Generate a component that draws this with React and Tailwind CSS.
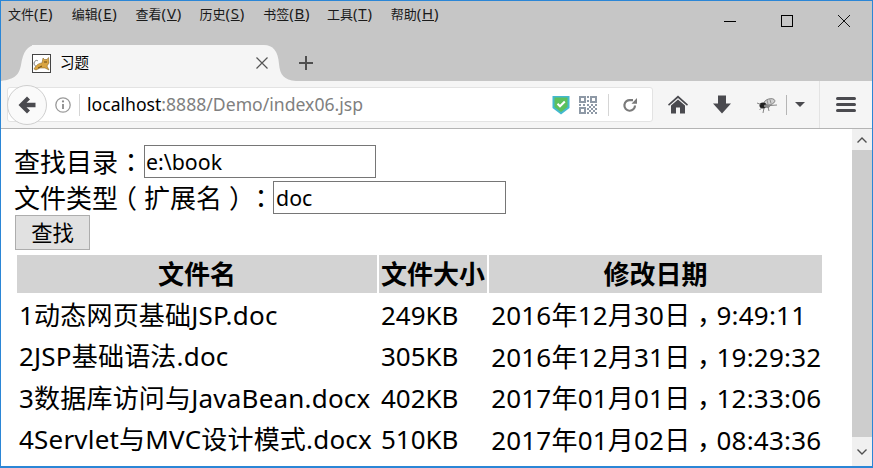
const sans = "font-['Noto_Sans','Noto_Sans_CJK_SC',sans-serif]";
const tcPunct = "font-['Noto_Sans_CJK_TC',sans-serif]";

const menus = [
  ["文件", "F"],
  ["编辑", "E"],
  ["查看", "V"],
  ["历史", "S"],
  ["书签", "B"],
  ["工具", "T"],
  ["帮助", "H"],
];

const files = [
  ["1动态网页基础JSP.doc", "249KB", "2016年12月30日", "9:49:11"],
  ["2JSP基础语法.doc", "305KB", "2016年12月31日", "19:29:32"],
  ["3数据库访问与JavaBean.docx", "402KB", "2017年01月01日", "12:33:06"],
  ["4Servlet与MVC设计模式.docx", "510KB", "2017年01月02日", "08:43:36"],
];

const TomcatIcon = () => (
  <svg width="19" height="19" viewBox="0 0 19 19" className="shrink-0">
    <rect x="0.5" y="0.5" width="18" height="18" fill="#fff" stroke="#444" />
    <path d="M2 15 C4 11 7 9 10 9 L11 4 L12.500 5.500 L15 5.500 L16.500 3.500 L17 9 L15 12 L17 16 L13 14 L8 14 L4 16 Z" fill="#d9a441" stroke="#7a5a1c" strokeWidth="0.5" />
    <path d="M2 9 C3 6 5 6 6 7 M2 9 C2 11 3 12 4 12" fill="none" stroke="#777" />
    <path d="M12 8 L15 8 M6 14 L10 12" stroke="#6b4a12" />
  </svg>
);

const BackIcon = () => (
  <svg width="20" height="20" viewBox="0 0 20 20">
    <path d="M10 1.500 L1.500 10 L10 18.500 L13 15.500 L9.500 12.200 H18.500 V7.800 H9.500 L13 4.500 Z" fill="#4a4a4f" />
  </svg>
);

const InfoIcon = () => (
  <svg width="18" height="18" viewBox="0 0 18 18">
    <circle cx="9" cy="9" r="7.200" fill="none" stroke="#9a9a9a" strokeWidth="1.300" />
    <circle cx="9" cy="5.400" r="1.100" fill="#8a8a8a" />
    <path d="M9 8 V13" stroke="#8a8a8a" strokeWidth="1.800" />
  </svg>
);

const ShieldIcon = () => (
  <svg width="18" height="20" viewBox="0 0 18 20">
    <path d="M0.500 1 H17.500 V13 L9 19.500 L0.500 13 Z" fill="#43b9cf" />
    <path d="M2.500 2.500 H15.500 V12 L9 17 L2.500 12 Z" fill="#5cc05c" />
    <path d="M5.500 8.800 L8 11.300 L12.800 6.500" fill="none" stroke="#fff" strokeWidth="2" />
  </svg>
);

const QrIcon = () => (
  <svg width="18" height="18" viewBox="0 0 18 18" fill="#8e99a6">
    <path fillRule="evenodd" d="M0 0 H7 V7 H0 Z M2 2 V5 H5 V2 Z M11 0 H18 V7 H11 Z M13 2 V5 H16 V2 Z M0 11 H7 V18 H0 Z M2 13 V16 H5 V13 Z" />
    <path d="M8 0 H10 V2 H8 Z M8 4 H10 V6 H8 Z M8 8 H10 V10 H8 Z M4 8 H6 V10 H4 Z M0 8 H2 V10 H0 Z M12 8 H14 V10 H12 Z M16 8 H18 V10 H16 Z M8 12 H10 V14 H8 Z M8 16 H10 V18 H8 Z M10 10 H12 V12 H10 Z M14 10 H16 V12 H14 Z M12 12 H14 V14 H12 Z M16 12 H18 V14 H16 Z M10 14 H12 V16 H10 Z M14 14 H16 V16 H14 Z M12 16 H14 V18 H12 Z M16 16 H18 V18 H16 Z" />
  </svg>
);

const ReloadIcon = () => (
  <svg width="16" height="16" viewBox="0 0 16 16">
    <path d="M13 8.500 A5.300 5.300 0 1 1 8.500 3.200 H11" fill="none" stroke="#7a7a7a" strokeWidth="2.200" />
    <path d="M9.500 6.800 L15 6.800 L15 1 Z" fill="#7a7a7a" />
  </svg>
);

const HomeIcon = () => (
  <svg width="20" height="19" viewBox="0 0 20 19" fill="#4a4a4f">
    <path d="M10 0.500 L0 9.500 L1 10.800 L10 3 L19 10.800 L20 9.500 Z" />
    <path d="M10 4.500 L3 10.500 V18.500 H8 V12.500 H12 V18.500 H17 V10.500 Z" />
  </svg>
);

const DownloadIcon = () => (
  <svg width="20" height="19" viewBox="0 0 20 19">
    <path d="M6 0.500 H14 V8.500 H19 L10 18.500 L1 8.500 H6 Z" fill="#4a4a4f" />
  </svg>
);

const BeeIcon = () => (
  <svg width="20" height="18" viewBox="0 0 20 18">
    <ellipse cx="12.500" cy="6" rx="5.500" ry="3" fill="#d0d0d0" stroke="#666" strokeWidth="0.700" transform="rotate(-15 12 6)" />
    <path d="M10 4 L11 8 M13 3.500 L14 7.500" stroke="#666" strokeWidth="0.600" />
    <ellipse cx="6" cy="9.500" rx="3.500" ry="3" fill="#1f1f1f" />
    <ellipse cx="10" cy="10" rx="3.200" ry="1.800" fill="#8a8a8a" />
    <path d="M0 7 L4 8.500 M2.500 14 L5 11.500 M7 12 L6 17 M11 11 L12 15 M13 9.500 L20 9" stroke="#555" strokeWidth="0.700" />
  </svg>
);

const TabSkirtLeft = () => (
  <svg width="36" height="36" viewBox="0 0 36 36" className="block shrink-0">
    <path d="M0 36 C14 34 18 30 20 20 C22 7 26 0 36 0 V36 Z" fill="#f5f5f5" />
  </svg>
);

const TabSkirtRight = () => (
  <svg width="32" height="36" viewBox="0 0 32 36" className="block shrink-0">
    <path d="M0 0 C9 0 14 6 15 19 C16 30 20 35 32 36 H0 Z" fill="#f5f5f5" />
  </svg>
);

export default function App() {
  return (
    <div className={`w-[873px] h-[468px] flex flex-col overflow-hidden bg-white border border-[#2b86d6] border-b-2 [text-spacing-trim:space-all] ${sans}`}>
      {/* title bar + tabs */}
      <div className="h-[80px] bg-[#c6c6c6] flex flex-col shrink-0 relative">
        <div className="h-[24px] flex items-center pl-[7px] text-[13px] text-[#1a1a1a] shrink-0">
          {menus.map(([label, key]) => (
            <span key={key} className="w-[63.800px] whitespace-nowrap">
              {label}
              <span className="text-[15px] tracking-[0.8px]">
                (<span className="underline">{key}</span>)
              </span>
            </span>
          ))}
        </div>
        <div className="absolute right-[21px] top-[13px] flex items-center gap-[45px]">
          <div className="w-[12px] h-[1px] bg-black" />
          <div className="w-[12px] h-[12px] border border-black" />
          <svg width="14" height="14" viewBox="0 0 14 14" className="-ml-[1px]">
            <path d="M1 1 L13 13 M13 1 L1 13" stroke="#111" strokeWidth="1" />
          </svg>
        </div>
        <div className="flex items-end mt-[20px] h-[36px]">
          <TabSkirtLeft />
          <div className="relative z-10 w-[232px] h-[36px] bg-[#f5f5f5] flex items-center gap-[9px] text-[14.500px] text-black -ml-[5px]">
            <TomcatIcon />
            <span>习题</span>
            <svg width="14" height="14" viewBox="0 0 14 14" className="ml-auto mr-[-5px]">
              <path d="M1.500 1.500 L12.500 12.500 M12.500 1.500 L1.500 12.500" stroke="#555" strokeWidth="1.200" />
            </svg>
          </div>
          <TabSkirtRight />
          <svg width="14" height="14" viewBox="0 0 14 14" className="mb-[11px] ml-[3px]">
            <path d="M7 0 V14 M0 7 H14" stroke="#4f4f4f" strokeWidth="2" />
          </svg>
        </div>
      </div>

      {/* nav toolbar */}
      <div className="h-[48px] bg-[#f5f5f5] border-b border-[#b4b4b4] flex items-center shrink-0">
        <div className="ml-[6px] flex items-center h-[35px] w-[646px] bg-white border border-[#e3e3e3] rounded-[3px] relative">
          <div className="absolute -left-[1px] -top-[3px] w-[40px] h-[40px] rounded-full bg-[#fafafa] border border-[#cfcfcf] flex items-center justify-center">
            <BackIcon />
          </div>
          <div className="ml-[46px]">
            <InfoIcon />
          </div>
          <div className="w-px h-[22px] bg-[#d5d5d5] ml-[7px]" />
          <div className="ml-[7px] text-[17.600px] text-[#808080] whitespace-nowrap">
            <span className="text-black">localhost</span>:8888/Demo/index06.jsp
          </div>
          <div className="ml-auto flex items-center">
            <ShieldIcon />
            <div className="ml-[9px]">
              <QrIcon />
            </div>
            <div className="w-px h-[22px] bg-[#d5d5d5] ml-[11px]" />
            <div className="ml-[13px] mr-[14px]">
              <ReloadIcon />
            </div>
          </div>
        </div>
        <div className="ml-[15px]"><HomeIcon /></div>
        <div className="ml-[24px]"><DownloadIcon /></div>
        <div className="ml-[25px]"><BeeIcon /></div>
        <div className="w-px h-[20px] bg-[#b5b5b5] ml-[9px]" />
        <div className="ml-[8px] w-0 h-0 border-x-[5px] border-x-transparent border-t-[5px] border-t-[#4a4a4f]" />
        <div className="w-px h-[47px] bg-[#e3e3e3] ml-[14px]" />
        <div className="ml-[16px] flex flex-col gap-[3px]">
          <div className="w-[20px] h-[3px] rounded-full bg-[#4a4a4f]" />
          <div className="w-[20px] h-[3px] rounded-full bg-[#4a4a4f]" />
          <div className="w-[20px] h-[3px] rounded-full bg-[#4a4a4f]" />
        </div>
      </div>

      {/* page + scrollbar */}
      <div className="flex-1 flex min-h-0">
        <div className="flex-1 pl-[13px] pt-[14px] text-[26px] text-black">
          <div className="flex items-center h-[36px]">
            <span className="leading-none">
              查找目录<span className={tcPunct}>：</span>
            </span>
            <input
              readOnly
              value="e:\book"
              className="w-[232px] h-[33px] px-[1px] border border-[#767676] bg-white text-[21.330px] outline-none"
            />
          </div>
          <div className="flex items-center h-[36px]">
            <span className="leading-none">
              文件类型<span className={`ml-[6px] mr-[7px] [font-feature-settings:'halt'] ${tcPunct}`}>（</span>扩展名<span className={`ml-[7px] mr-[6px] [font-feature-settings:'halt'] ${tcPunct}`}>）</span><span className={tcPunct}>：</span>
            </span>
            <input
              readOnly
              value="doc"
              className="w-[233px] h-[33px] -ml-[1px] px-[2px] border border-[#767676] bg-white text-[21.330px] outline-none"
            />
          </div>
          <button className="block w-[75px] h-[35px] ml-[1px] bg-[#e1e1e1] border border-[#adadad] text-[21.330px] leading-none">
            查找
          </button>
          <table className="border-separate border-spacing-[2px] ml-[1px] mt-[3px] table-fixed w-[809px]">
            <colgroup>
              <col className="w-[359px]" />
              <col className="w-[108px]" />
              <col className="w-[332px]" />
            </colgroup>
            <thead>
              <tr className="bg-[#d3d3d3] h-[38px]">
                <th className="font-bold p-0 leading-none">文件名</th>
                <th className="font-bold p-0 leading-none whitespace-nowrap">文件大小</th>
                <th className="font-bold p-0 leading-none">修改日期</th>
              </tr>
            </thead>
            <tbody>
              {files.map(([name, size, date, time]) => (
                <tr key={name} className="h-[39.500px]">
                  <td className="px-[2px] py-0 leading-none whitespace-nowrap tracking-[0.2px]">{name}</td>
                  <td className="px-[2px] py-0 leading-none whitespace-nowrap">{size}</td>
                  <td className="px-[2px] py-0 leading-none whitespace-nowrap tracking-[0.2px]">
                    {date}
                    <span className={`inline-block translate-y-[7px] ${tcPunct}`}>，</span>
                    {time}
                  </td>
                </tr>
              ))}
            </tbody>
          </table>
        </div>
        <div className="w-[20px] bg-[#f0f0f0] flex flex-col shrink-0">
          <div className="h-[21px] flex items-center justify-center">
            <svg width="10" height="6" viewBox="0 0 10 6">
              <path d="M0.500 5.500 L5 1 L9.500 5.500" fill="none" stroke="#505050" strokeWidth="1.400" />
            </svg>
          </div>
          <div className="flex-1 bg-[#cdcdcd]" />
          <div className="h-[29px] flex items-center justify-center">
            <svg width="10" height="6" viewBox="0 0 10 6">
              <path d="M0.500 0.500 L5 5 L9.500 0.500" fill="none" stroke="#505050" strokeWidth="1.400" />
            </svg>
          </div>
        </div>
      </div>
    </div>
  );
}
